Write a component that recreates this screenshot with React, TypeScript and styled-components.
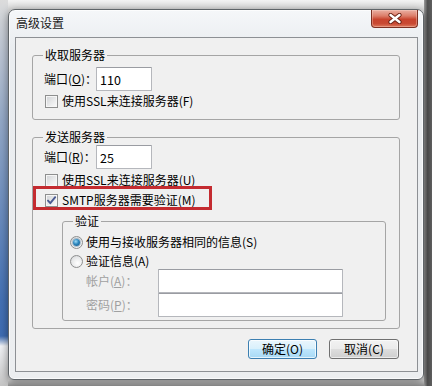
import React from "react";
import styled, { createGlobalStyle } from "styled-components";

const GlobalStyle = createGlobalStyle`
  html, body { margin: 0; padding: 0; }
  body {
    width: 432px;
    height: 386px;
    overflow: hidden;
    font-family: "Noto Sans CJK SC", "Microsoft YaHei", sans-serif;
    font-size: 12px;
    color: #000;
  }
  * { box-sizing: border-box; }
`;

const Desktop = styled.div`
  width: 432px;
  height: 386px;
  overflow: hidden;
  padding: 9px 8px 6px 8px;
  background:
    linear-gradient(180deg, #dcdcdc 0px, #c9ced6 30px, #94a9c8 120px, #4471b4 300px, #3e6cb2 336px, #f2f4f7 346px, #c4c4c4 386px) left top / 8px 100% no-repeat,
    linear-gradient(90deg, #9a9a9a, #4f4f4f 45%, #5f5f5f) right top / 8px 100% no-repeat,
    linear-gradient(180deg, #d6d6d6, #8e8e8e) left bottom / 100% 6px no-repeat,
    linear-gradient(180deg, #f3f3f3 0px, #dadada 9px, #d2d2d2 370px);
`;

const Window = styled.div`
  width: 416px;
  height: 371px;
  display: flex;
  flex-direction: column;
  padding: 0 5px 7px 6px;
  border: 1px solid #5f6468;
  border-radius: 7px 7px 6px 6px;
  background: linear-gradient(180deg, #f5f7f9 0%, #eaedf0 10%, #eceef0 100%);
  box-shadow: inset 0 0 0 1px rgba(255, 255, 255, 0.7), 0 2px 8px rgba(0, 0, 0, 0.45);
`;

const TitleBar = styled.div`
  height: 27px;
  display: flex;
  justify-content: space-between;
  align-items: flex-start;
`;

const Title = styled.div`
  margin-top: 6px;
  padding-left: 1px;
  line-height: 14px;
  font-size: 12px;
  color: #1a1a1a;
`;

const CloseButton = styled.div`
  width: 47px;
  height: 18px;
  display: flex;
  align-items: center;
  justify-content: center;
  border: 1px solid #7d3022;
  border-top: none;
  border-radius: 0 0 4px 4px;
  background: linear-gradient(180deg, #eab0a3 0%, #dc7d69 35%, #c8442e 55%, #c94a33 80%, #de7a5e 100%);
  box-shadow: inset 0 0 0 1px rgba(255, 220, 210, 0.35);
`;

const Client = styled.div`
  flex: 1;
  display: flex;
  flex-direction: column;
  border: 1px solid #8d9094;
  background: #f0f0f0;
  padding: 10px 17px 12px 16px;
`;

const Group = styled.fieldset<{ $top: number; $pad: string; $left?: number; $width?: number }>`
  margin: ${(p) => p.$top}px 0 0 ${(p) => p.$left ?? 0}px;
  width: ${(p) => (p.$width ? `${p.$width}px` : "auto")};
  min-width: 0;
  border: 1px solid #a5a5a5;
  border-radius: 3px;
  padding: ${(p) => p.$pad};
`;

const Caption = styled.legend<{ $shift: number }>`
  padding: 0 2px;
  margin-left: ${(p) => p.$shift}px;
  line-height: 14px;
  font-size: 12px;
`;

const PortRow = styled.div`
  display: flex;
  align-items: center;
  height: 24px;
`;

const PortLabel = styled.span`
  width: 52px;
  line-height: 16px;
  white-space: nowrap;
  overflow: hidden;
`;

const TextBox = styled.input<{ $w: number }>`
  width: ${(p) => p.$w}px;
  height: 24px;
  margin: 0;
  padding: 0 3px;
  border: 1px solid #b5b7bc;
  border-top-color: #9a9ca2;
  border-radius: 1px;
  background: #fff;
  font-family: "Noto Sans CJK SC", "Microsoft YaHei", sans-serif;
  font-size: 12.5px;
  color: #000;
  outline: none;
`;

const CheckRow = styled.div<{ $top: number }>`
  position: relative;
  display: flex;
  align-items: center;
  gap: 4px;
  height: 16px;
  margin-top: ${(p) => p.$top}px;
  line-height: 16px;
  white-space: nowrap;
`;

const Box = styled.span`
  width: 13px;
  height: 13px;
  margin-left: 1px;
  flex: none;
  display: flex;
  border: 1px solid #8e8f8f;
  background: linear-gradient(135deg, #cfd1d4 0%, #e9eaeb 55%, #fbfbfb 100%);
  box-shadow: inset 0 0 0 1px #f6f6f6;
`;

const Highlight = styled.span`
  position: absolute;
  left: -11px;
  top: -6px;
  width: 179px;
  height: 24px;
  border: 3px solid #c42b30;
  pointer-events: none;
`;

const RadioRow = styled.div<{ $top: number }>`
  display: flex;
  align-items: center;
  gap: 3px;
  height: 16px;
  margin-top: ${(p) => p.$top}px;
  line-height: 16px;
  white-space: nowrap;
`;

const Radio = styled.span<{ $on?: boolean }>`
  width: 13px;
  height: 13px;
  flex: none;
  display: flex;
  align-items: center;
  justify-content: center;
  border: 1px solid #8e8f8f;
  border-radius: 50%;
  background: radial-gradient(circle at 60% 65%, #ffffff 0%, #e6e7e8 60%, #c9cbce 100%);
  &::after {
    content: "";
    display: ${(p) => (p.$on ? "block" : "none")};
    width: 7px;
    height: 7px;
    border-radius: 50%;
    background: radial-gradient(circle at 40% 35%, #9fdcf7 0%, #2c86bd 45%, #15507e 100%);
    box-shadow: 0 0 0 1px rgba(40, 90, 130, 0.35);
  }
`;

const FieldRow = styled.div`
  display: flex;
  align-items: center;
  height: 24px;
  padding-left: 16px;
`;

const FieldLabel = styled.span`
  width: 72px;
  line-height: 16px;
  color: #a0a0a0;
  white-space: nowrap;
`;

const ButtonRow = styled.div`
  display: flex;
  justify-content: flex-end;
  gap: 12px;
  margin: 10px 1px 0 0;
`;

const Button = styled.div<{ $primary?: boolean; $w: number }>`
  width: ${(p) => p.$w}px;
  height: 20px;
  display: flex;
  align-items: center;
  justify-content: center;
  line-height: 18px;
  border-radius: 3px;
  border: 1px solid ${(p) => (p.$primary ? "#3c7fb1" : "#707070")};
  background: ${(p) =>
    p.$primary
      ? "linear-gradient(180deg, #eaf6fd 0%, #d9f0fc 48%, #bee6fd 52%, #a7d9f5 100%)"
      : "linear-gradient(180deg, #f2f2f2 0%, #ebebeb 48%, #dddddd 52%, #cfcfcf 100%)"};
  box-shadow: inset 0 0 0 1px ${(p) => (p.$primary ? "rgba(255,255,255,0.7)" : "rgba(255,255,255,0.6)")};
`;

const CheckMark = () => (
  <svg width="11" height="11" viewBox="0 0 11 11" style={{ display: "block" }}>
    <path d="M2 5.6 L4.3 8.2 L9.2 2.2" fill="none" stroke="#4a5a92" strokeWidth="1.9" strokeLinecap="round" strokeLinejoin="round" />
  </svg>
);

const CloseGlyph = () => (
  <svg width="14" height="11" viewBox="0 0 14 11">
    <path d="M2.5 2 L11.5 9 M11.5 2 L2.5 9" stroke="#6a2215" strokeWidth="4.2" strokeLinecap="round" />
    <path d="M2.5 2 L11.5 9 M11.5 2 L2.5 9" stroke="#ffffff" strokeWidth="2.4" strokeLinecap="round" />
  </svg>
);

export default function App() {
  return (
    <>
      <GlobalStyle />
      <Desktop>
        <Window>
          <TitleBar>
            <Title>高级设置</Title>
            <CloseButton>
              <CloseGlyph />
            </CloseButton>
          </TitleBar>
          <Client>
            <Group $top={0} $pad="5px 10px 10px 11px">
              <Caption $shift={-1}>收取服务器</Caption>
              <PortRow>
                <PortLabel>
                  端口(<u>O</u>)：
                </PortLabel>
                <TextBox $w={56} defaultValue="110" readOnly />
              </PortRow>
              <CheckRow $top={2}>
                <Box />
                使用SSL来连接服务器(F)
              </CheckRow>
            </Group>

            <Group $top={10} $pad="1px 10px 7px 11px">
              <Caption $shift={-1}>发送服务器</Caption>
              <PortRow>
                <PortLabel>
                  端口(<u>R</u>)：
                </PortLabel>
                <TextBox $w={56} defaultValue="25" readOnly />
              </PortRow>
              <CheckRow $top={3}>
                <Box />
                使用SSL来连接服务器(U)
              </CheckRow>
              <CheckRow $top={4}>
                <Box>
                  <CheckMark />
                </Box>
                SMTP服务器需要验证(M)
                <Highlight />
              </CheckRow>

              <Group $top={6} $left={18} $width={324} $pad="6px 0 3px 7px">
                <Caption $shift={3}>验证</Caption>
                <RadioRow $top={0}>
                  <Radio $on />
                  使用与接收服务器相同的信息(S)
                </RadioRow>
                <RadioRow $top={3}>
                  <Radio />
                  验证信息(A)
                </RadioRow>
                <FieldRow>
                  <FieldLabel>
                    帐户(<u>A</u>)：
                  </FieldLabel>
                  <TextBox $w={185} disabled />
                </FieldRow>
                <FieldRow>
                  <FieldLabel>
                    密码(<u>P</u>)：
                  </FieldLabel>
                  <TextBox $w={185} disabled />
                </FieldRow>
              </Group>
            </Group>

            <ButtonRow>
              <Button $primary $w={69}>
                确定(O)
              </Button>
              <Button $w={70}>取消(C)</Button>
            </ButtonRow>
          </Client>
        </Window>
      </Desktop>
    </>
  );
}
